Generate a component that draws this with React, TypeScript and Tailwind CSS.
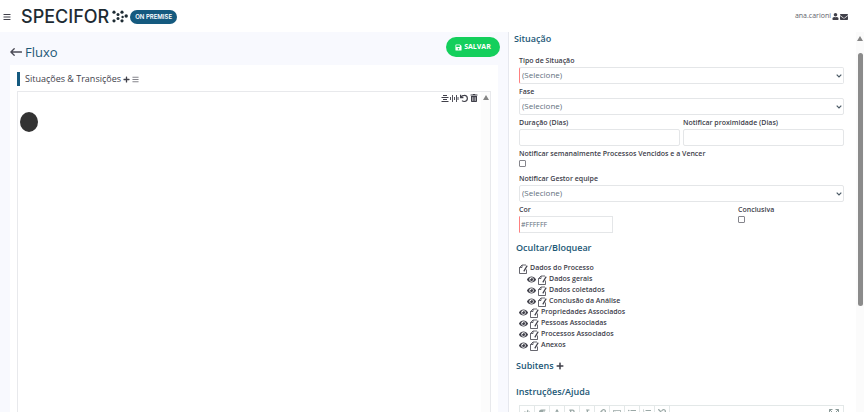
import type { ReactNode } from 'react';
import {
  FaBars,
  FaBold,
  FaCode,
  FaEnvelope,
  FaEye,
  FaFont,
  FaItalic,
  FaLink,
  FaListOl,
  FaListUl,
  FaParagraph,
  FaPlus,
  FaRegImage,
  FaSave,
  FaTrashAlt,
  FaUnlink,
  FaUser,
} from 'react-icons/fa';

interface TreeItem {
  label: string;
  indent: string;
  eye: boolean;
}

const tree: TreeItem[] = [
  { label: 'Dados do Processo', indent: 'pl-0', eye: false },
  { label: 'Dados gerais', indent: 'pl-2', eye: true },
  { label: 'Dados coletados', indent: 'pl-2', eye: true },
  { label: 'Conclusão da Análise', indent: 'pl-2', eye: true },
  { label: 'Propriedades Associados', indent: 'pl-0', eye: true },
  { label: 'Pessoas Associadas', indent: 'pl-0', eye: true },
  { label: 'Processos Associados', indent: 'pl-0', eye: true },
  { label: 'Anexos', indent: 'pl-0', eye: true },
];

const editorTools = [
  { name: 'Código', Icon: FaCode },
  { name: 'Parágrafo', Icon: FaParagraph },
  { name: 'Fonte', Icon: FaFont },
  { name: 'Negrito', Icon: FaBold },
  { name: 'Itálico', Icon: FaItalic },
  { name: 'Link', Icon: FaLink },
  { name: 'Imagem', Icon: FaRegImage },
  { name: 'Lista', Icon: FaListUl },
  { name: 'Lista numerada', Icon: FaListOl },
  { name: 'Remover link', Icon: FaUnlink },
];

function LogoDots() {
  return (
    <svg viewBox="0 0 16 13" className="h-[13px] w-4" fill="#1d2b33">
      <circle cx="2" cy="2.2" r="1.6" />
      <circle cx="10" cy="2.2" r="1.6" />
      <circle cx="6" cy="4.4" r="1.5" />
      <circle cx="14.2" cy="6" r="1.7" />
      <circle cx="6" cy="8.6" r="1.5" />
      <circle cx="10.6" cy="7" r="1.2" />
      <circle cx="2" cy="10.8" r="1.6" />
      <circle cx="10" cy="10.8" r="1.6" />
    </svg>
  );
}

function BackArrow() {
  return (
    <svg viewBox="0 0 12 8" className="h-2 w-3" fill="none" stroke="#4a4a55" strokeWidth="1.3">
      <path d="M11.5 4H1M4.2 .7.9 4l3.3 3.3" strokeLinecap="round" strokeLinejoin="round" />
    </svg>
  );
}

function PageEdit() {
  return (
    <svg viewBox="0 0 9 10" className="h-[10px] w-[9px]" fill="none" stroke="#40404a" strokeWidth=".8">
      <path d="M7.5 5.5v4h-7v-6l2.5-2.5h4" />
      <path d="M.5 3.5h2.5v-2.5" />
      <path d="M4.8 7.4 8.2 1.6" strokeWidth="1.2" />
    </svg>
  );
}

function CenterLines() {
  return (
    <svg viewBox="0 0 9 9" className="size-[9px]" fill="none" stroke="currentColor" strokeWidth="1">
      <path d="M2 1.5h4M.5 3.5h7M2 5.5h4M.5 7.5h7" />
    </svg>
  );
}

function WaveBars() {
  return (
    <svg viewBox="0 0 9 9" className="size-[9px]" fill="none" stroke="currentColor" strokeWidth=".9">
      <path d="M.5 3v3M2.5 1v7M4.5 3v3M6.5 1v7M8 3v3" />
    </svg>
  );
}

function UndoArrow() {
  return (
    <svg viewBox="0 0 9 9" className="size-[9px]" fill="none" stroke="currentColor" strokeWidth="1.2">
      <path d="M1.6 .8v2.8h2.8" />
      <path d="M1.8 3.4C2.8 1.9 4 1.4 5.2 1.4a3 3 0 0 1 .2 6.1c-1 0-1.8-.3-2.4-.9" />
    </svg>
  );
}

function Expand() {
  return (
    <svg viewBox="0 0 10 10" className="size-[10px]" fill="none" stroke="#8b9a98" strokeWidth="1">
      <path d="M.5 3.5v-3h3M.5.5l3 3M9.5 3.5v-3h-3M9.5.5l-3 3M.5 6.5v3h3M9.5 6.5v3h-3" />
    </svg>
  );
}

function Triangle() {
  return (
    <svg viewBox="0 0 6 5" className="h-[5px] w-[6px]" fill="#858585">
      <path d="M3 0 6 5H0z" />
    </svg>
  );
}

function SelectField({ id, label, required }: { id: string; label: string; required?: boolean }) {
  return (
    <div>
      <label htmlFor={id} className="block pt-[2px] leading-3">
        {label}
      </label>
      <div className="relative">
        <select
          id={id}
          className={
            required
              ? 'block h-[17px] w-full appearance-none rounded-xs border border-[#e4e6e8] border-l-[#ff8080] bg-white px-[2px] pb-px text-[8px] font-normal text-[#5f6f7c]'
              : 'block h-[17px] w-full appearance-none rounded-xs border border-[#e4e6e8] bg-white px-[2px] pb-px text-[8px] font-normal text-[#5f6f7c]'
          }
        >
          <option>(Selecione)</option>
        </select>
        <svg
          viewBox="0 0 6 4"
          className="pointer-events-none absolute top-[7px] right-[2px] h-1 w-[6px]"
          fill="none"
          stroke="#4b5a66"
          strokeWidth="1.2"
        >
          <path d="m.7.7 2.3 2.3L5.3.7" />
        </svg>
      </div>
    </div>
  );
}

function TextField({ id, label }: { id: string; label: string }) {
  return (
    <div>
      <label htmlFor={id} className="block pt-[2px] leading-3">
        {label}
      </label>
      <input id={id} type="text" className="block h-[17px] w-full rounded-xs border border-[#e4e6e8] px-[3px]" />
    </div>
  );
}

function CheckField({ id, label }: { id: string; label: string }) {
  return (
    <div>
      <label htmlFor={id} className="block leading-3">
        {label}
      </label>
      <input
        id={id}
        type="checkbox"
        className="block size-[7px] appearance-none rounded-[1px] border border-[#85858c] bg-white checked:bg-[#155a7f]"
      />
    </div>
  );
}

function SectionTitle({ children }: { children: ReactNode }) {
  return <h2 className="flex items-center gap-[2px] text-[9px] leading-3 font-semibold text-[#1c5876]">{children}</h2>;
}

export default function App() {
  return (
    <div className="flex h-screen flex-col overflow-hidden bg-white font-['Open_Sans',sans-serif] text-[7px] text-[#40404a]">
      <header className="flex h-8 shrink-0 items-center pt-px pr-4 pl-[3px]">
        <button type="button" aria-label="Menu" className="mr-[10px]">
          <FaBars className="size-2" />
        </button>
        <span className="mr-[3px] font-[Inter,sans-serif] text-[18px] leading-5 font-medium text-[#1d2b33]">SPECIFOR</span>
        <LogoDots />
        <span className="ml-[2px] flex h-[14px] items-center rounded-full bg-[#155a7f] px-[5px] font-[Inter,sans-serif] text-[6px] font-semibold text-white">
          ON PREMISE
        </span>
        <div className="ml-auto flex items-center gap-px">
          <span className="text-[#62626c]">ana.carioni</span>
          <FaUser className="size-[7px]" />
          <FaEnvelope className="size-2" />
        </div>
      </header>

      <div className="grid min-h-0 flex-1 grid-cols-[508fr_356fr]">
        <main className="flex min-w-0 flex-col bg-[#f8f9fe] pr-[10px] pl-[10px]">
          <div className="flex h-[33px] shrink-0 items-start justify-between">
            <div className="flex items-center gap-[3px] pt-[11px]">
              <a href="#voltar" aria-label="Voltar">
                <BackArrow />
              </a>
              <h1 className="text-[13px] leading-[18px] font-medium text-[#1c5876]">Fluxo</h1>
            </div>
            <button
              type="button"
              className="mt-[5px] -mr-[2px] flex h-5 w-[54px] items-center justify-center gap-[2px] rounded-full bg-[#14cf5c] text-[7px] font-bold text-white"
            >
              <FaSave className="size-[7px]" />
              SALVAR
            </button>
          </div>

          <section className="flex min-h-0 flex-1 flex-col bg-white px-[7px] pt-[7px]">
            <div className="flex h-[14px] items-center gap-[2px] border-l-[3px] border-[#155a7f] pl-[5px]">
              <h2 className="text-[9px] leading-3 font-medium">Situações &amp; Transições</h2>
              <button type="button" aria-label="Adicionar">
                <FaPlus className="size-[7px]" />
              </button>
              <button type="button" aria-label="Listar">
                <FaBars className="size-[7px] text-[#85858c]" />
              </button>
            </div>
            <div className="mt-[5px] flex flex-1 justify-between border border-b-0 border-[#e8e9ec]">
              <div className="flex-1 pt-5 pl-[2px]">
                <div className="h-5 w-[18px] rounded-[50%] bg-[#333333]" />
              </div>
              <div className="flex items-start pt-[2px] pr-[3px]">
                <button type="button" aria-label="Centralizar">
                  <CenterLines />
                </button>
                <button type="button" aria-label="Distribuir">
                  <WaveBars />
                </button>
                <button type="button" aria-label="Desfazer">
                  <UndoArrow />
                </button>
                <button type="button" aria-label="Excluir" className="ml-[2px]">
                  <FaTrashAlt className="size-2" />
                </button>
              </div>
              <div className="flex w-[9px] justify-center bg-[#fcfcfc] pt-[3px]">
                <Triangle />
              </div>
            </div>
          </section>
        </main>

        <aside className="flex min-w-0 border-l border-[#e6e8ee]">
          <form className="min-w-0 flex-1 overflow-hidden pr-3 pl-[5px] font-semibold">
            <div className="pt-px">
              <SectionTitle>Situação</SectionTitle>
            </div>
            <div className="mt-2 pl-[5px]">
              <SelectField id="tipo" label="Tipo de Situação" required />
              <SelectField id="fase" label="Fase" />
              <div className="grid grid-cols-2 gap-[3px]">
                <TextField id="duracao" label="Duração (Dias)" />
                <TextField id="proximidade" label="Notificar proximidade (Dias)" />
              </div>
              <div className="mt-[2px] mb-1">
                <CheckField id="semanal" label="Notificar semanalmente Processos Vencidos e a Vencer" />
              </div>
              <SelectField id="gestor" label="Notificar Gestor equipe" />
              <div className="mt-[2px] grid grid-cols-[219fr_106fr]">
                <div>
                  <label htmlFor="cor" className="block leading-3">
                    Cor
                  </label>
                  <input
                    id="cor"
                    type="text"
                    defaultValue="#FFFFFF"
                    className="block h-[17px] w-[94px] border border-[#e4e6e8] border-l-[#ff8080] px-px font-normal text-[#5f6f7c]"
                  />
                </div>
                <CheckField id="conclusiva" label="Conclusiva" />
              </div>
            </div>

            <div className="mt-[9px] pl-[2px]">
              <SectionTitle>Ocultar/Bloquear</SectionTitle>
              <ul className="mt-[9px] pl-[3px]">
                {tree.map(({ label, indent, eye }) => (
                  <li key={label} className={indent}>
                    <div className="flex h-[11px] items-center gap-[2px]">
                      {eye && (
                        <button type="button" aria-label={`Ocultar ${label}`}>
                          <FaEye className="size-[9px]" />
                        </button>
                      )}
                      <button type="button" aria-label={`Bloquear ${label}`}>
                        <PageEdit />
                      </button>
                      <span>{label}</span>
                    </div>
                  </li>
                ))}
              </ul>
              <div className="mt-[9px]">
                <SectionTitle>
                  Subitens
                  <button type="button" aria-label="Adicionar subitem">
                    <FaPlus className="size-2 text-[#40404a]" />
                  </button>
                </SectionTitle>
              </div>
              <div className="mt-[14px]">
                <SectionTitle>Instruções/Ajuda</SectionTitle>
              </div>
              <div className="mt-[7px] ml-[3px] flex h-5 border border-[#e3e8e8]">
                {editorTools.map(({ name, Icon }) => (
                  <button
                    key={name}
                    type="button"
                    aria-label={name}
                    className="flex w-[15px] justify-center border-r border-[#e3e8e8] pt-[3px] text-[#9aa8a6]"
                  >
                    <Icon className="size-2" />
                  </button>
                ))}
                <button type="button" aria-label="Tela cheia" className="mr-1 ml-auto flex pt-[3px]">
                  <Expand />
                </button>
              </div>
            </div>
          </form>
          <div className="flex w-2 shrink-0 flex-col items-center gap-3 bg-[#fbfbfb] pt-1">
            <Triangle />
            <div className="h-[65%] w-[5px] rounded-full bg-[#8b8b8b]" />
          </div>
        </aside>
      </div>
    </div>
  );
}
